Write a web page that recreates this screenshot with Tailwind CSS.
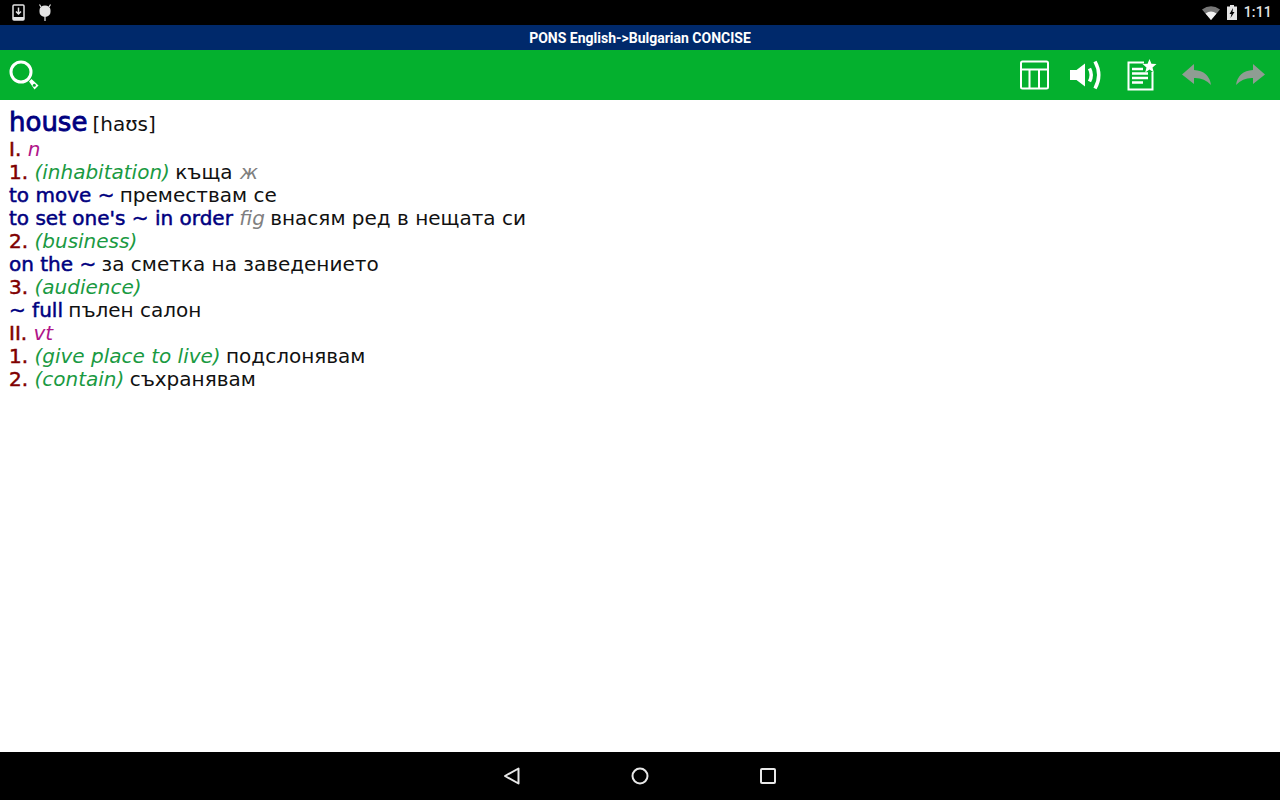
<!DOCTYPE html>
<html lang="en">
<head>
    <meta charset="UTF-8">
    <title>PONS English->Bulgarian CONCISE</title>
    <script src="https://cdn.jsdelivr.net/npm/@tailwindcss/browser@4"></script>
</head>
<body class="bg-white">
    <div class="w-[1280px] h-[800px] flex flex-col overflow-hidden font-['DejaVu_Sans',sans-serif]">
        <!-- Status bar -->
        <div class="h-[25px] bg-black flex items-center px-[12px] text-[#e4e4e4]">
            <svg width="14" height="17" viewBox="0 0 14 17" class="mb-[1px]">
                <rect x="1" y="1" width="11" height="15" rx="1" fill="none" stroke="#e4e4e4" stroke-width="1.5"/>
                <rect x="1" y="13" width="11" height="3" fill="#e4e4e4"/>
                <path d="M6.500 3.500v6M4 7.500l2.500 2.500L9 7.500" fill="none" stroke="#e4e4e4" stroke-width="1.500"/>
            </svg>
            <svg width="14" height="18" viewBox="0 0 14 18" class="ml-[12px]">
                <path d="M1.500 6a5.500 4.500 0 0 1 11 0v2a5.500 5 0 0 1-11 0z" fill="#e4e4e4"/>
                <path d="M3 3L1.500.5M11 3l1.500-2.500M7 13v4" stroke="#e4e4e4" stroke-width="1.200" fill="none"/>
            </svg>
            <div class="ml-auto flex items-center">
                <svg width="18" height="14" viewBox="0 0 18 14">
                    <path d="M0 3.500Q9-3 18 3.500L9 14z" fill="#777"/>
                    <path d="M3.500 7.500Q9 3.500 14.500 7.500L9 14z" fill="#f2f2f2"/>
                </svg>
                <svg width="10" height="15" viewBox="0 0 10 15" class="ml-[7px]">
                    <path d="M3 0h4v1.500h3V15H0V1.500h3z" fill="#e4e4e4"/>
                    <path d="M6 3L2.500 9h2L3.500 13 7.500 7h-2z" fill="#000"/>
                </svg>
                <span class="ml-[7px] mr-[-4px] font-['Roboto',sans-serif] text-[14px] font-medium tracking-[0.2px]">1:11</span>
            </div>
        </div>

        <!-- Title bar -->
        <div class="h-[25px] pt-[1px] bg-[#00296b] flex items-center justify-center text-white text-[14px] font-bold font-['Roboto',sans-serif]">PONS English-&gt;Bulgarian CONCISE</div>

        <!-- Toolbar -->
        <div class="h-[50px] bg-[#04b02e] flex items-center pl-[9px]">
            <svg width="30" height="30" viewBox="0 0 30 30">
                <circle cx="12" cy="12" r="10" fill="none" stroke="#fff" stroke-width="3"/>
                <path d="M20 21.500l2.500-2.500 7 6.500-4 4z" fill="#fff"/>
                <circle cx="25.300" cy="25.300" r="1.500" fill="#04b02e"/>
            </svg>
            <div class="ml-auto flex items-center">
                <svg width="30" height="30" viewBox="0 0 30 30">
                    <rect x="1" y="1.500" width="27" height="27" rx="1.500" fill="none" stroke="#fff" stroke-width="2"/>
                    <path d="M1 9.500h27M9.500 9.500v19M19 9.500v19" stroke="#fff" stroke-width="2" fill="none"/>
                </svg>
                <svg width="34" height="30" viewBox="0 0 34 30" class="ml-[19px]">
                    <path d="M1 10h6.500L16 3.500v23L7.500 20H1z" fill="#fff"/>
                    <path d="M20.500 8.500q3.500 6.500 0 13" fill="none" stroke="#fff" stroke-width="3.500"/>
                    <path d="M26 1.500q7.500 13.500 0 27" fill="none" stroke="#fff" stroke-width="3.500"/>
                </svg>
                <svg width="30" height="32" viewBox="0 0 30 32" class="ml-[24px]">
                    <path d="M17 3.500H1.500v27h24V13" fill="none" stroke="#fff" stroke-width="2"/>
                    <path d="M5 10h11M5 14.500h16M5 19h16M5 23.500h11" stroke="#fff" stroke-width="2.400" fill="none"/>
                    <path d="M22.500 0l1.900 4.800 5.100.3-4 3.300 1.300 5-4.300-2.800-4.300 2.800 1.300-5-4-3.300 5.100-.3z" fill="#fff"/>
                </svg>
                <svg width="32" height="24" viewBox="0 0 32 24" class="ml-[24px]">
                    <path d="M13 1L1 11.500 13 21v-6q10-.5 17 7-2-14-17-15z" fill="#8f9d93"/>
                </svg>
                <svg width="32" height="24" viewBox="0 0 32 24" class="ml-[21px] mr-[14px]">
                    <path d="M19 1l12 10.500L19 21v-6Q9 14.500 2 22q2-14 17-15z" fill="#8f9d93"/>
                </svg>
            </div>
        </div>

        <!-- Entry -->
        <div class="flex-1 bg-white pl-[9px] pt-[6px] text-[20px] leading-[23px] text-[#111] whitespace-nowrap">
            <div class="h-[32px] flex items-baseline"><span class="text-[26px] leading-[32px] text-[#00007f] [-webkit-text-stroke:0.8px_#00007f]">house</span><span class="ml-[5px]">[haʊs]</span></div>
            <div><span class="text-[#7f0000] [-webkit-text-stroke:0.5px_#7f0000]">I.</span> <i class="text-[#b0158a]">n</i></div>
            <div><span class="text-[#7f0000] [-webkit-text-stroke:0.5px_#7f0000]">1.</span> <i class="text-[#1a9a42]">(inhabitation)</i> <span class="-ml-px">къща</span> <i class="ml-px text-[#808080]">ж</i></div>
            <div><span class="text-[#00007f] [-webkit-text-stroke:0.5px_#00007f]">to move ~</span> <span class="-ml-px">премествам се</span></div>
            <div><span class="text-[#00007f] [-webkit-text-stroke:0.5px_#00007f]">to set one's ~ in order</span> <i class="text-[#808080]">fig</i> <span class="-ml-px">внасям ред в нещата си</span></div>
            <div><span class="text-[#7f0000] [-webkit-text-stroke:0.5px_#7f0000]">2.</span> <i class="text-[#1a9a42]">(business)</i></div>
            <div><span class="text-[#00007f] [-webkit-text-stroke:0.5px_#00007f]">on the ~</span> <span class="-ml-px">за сметка на заведението</span></div>
            <div><span class="text-[#7f0000] [-webkit-text-stroke:0.5px_#7f0000]">3.</span> <i class="text-[#1a9a42]">(audience)</i></div>
            <div><span class="text-[#00007f] [-webkit-text-stroke:0.5px_#00007f]">~ full</span> <span class="-ml-px">пълен салон</span></div>
            <div><span class="text-[#7f0000] [-webkit-text-stroke:0.5px_#7f0000]">II.</span> <i class="text-[#b0158a]">vt</i></div>
            <div><span class="text-[#7f0000] [-webkit-text-stroke:0.5px_#7f0000]">1.</span> <i class="text-[#1a9a42]">(give place to live)</i> <span class="-ml-px">подслонявам</span></div>
            <div><span class="text-[#7f0000] [-webkit-text-stroke:0.5px_#7f0000]">2.</span> <i class="text-[#1a9a42]">(contain)</i> <span class="-ml-px">съхранявам</span></div>
        </div>

        <!-- Navigation bar -->
        <div class="h-[48px] bg-black flex items-center justify-center gap-[100px]">
            <svg width="28" height="20" viewBox="0 0 28 20">
                <path d="M20.500 2.500v15L7 10z" fill="none" stroke="#e8e8e8" stroke-width="2" stroke-linejoin="round"/>
            </svg>
            <svg width="28" height="20" viewBox="0 0 28 20">
                <circle cx="14" cy="10" r="7.500" fill="none" stroke="#e8e8e8" stroke-width="2"/>
            </svg>
            <svg width="28" height="20" viewBox="0 0 28 20">
                <rect x="7" y="3" width="14" height="14" rx="1" fill="none" stroke="#e8e8e8" stroke-width="2"/>
            </svg>
        </div>
    </div>
</body>
</html>
